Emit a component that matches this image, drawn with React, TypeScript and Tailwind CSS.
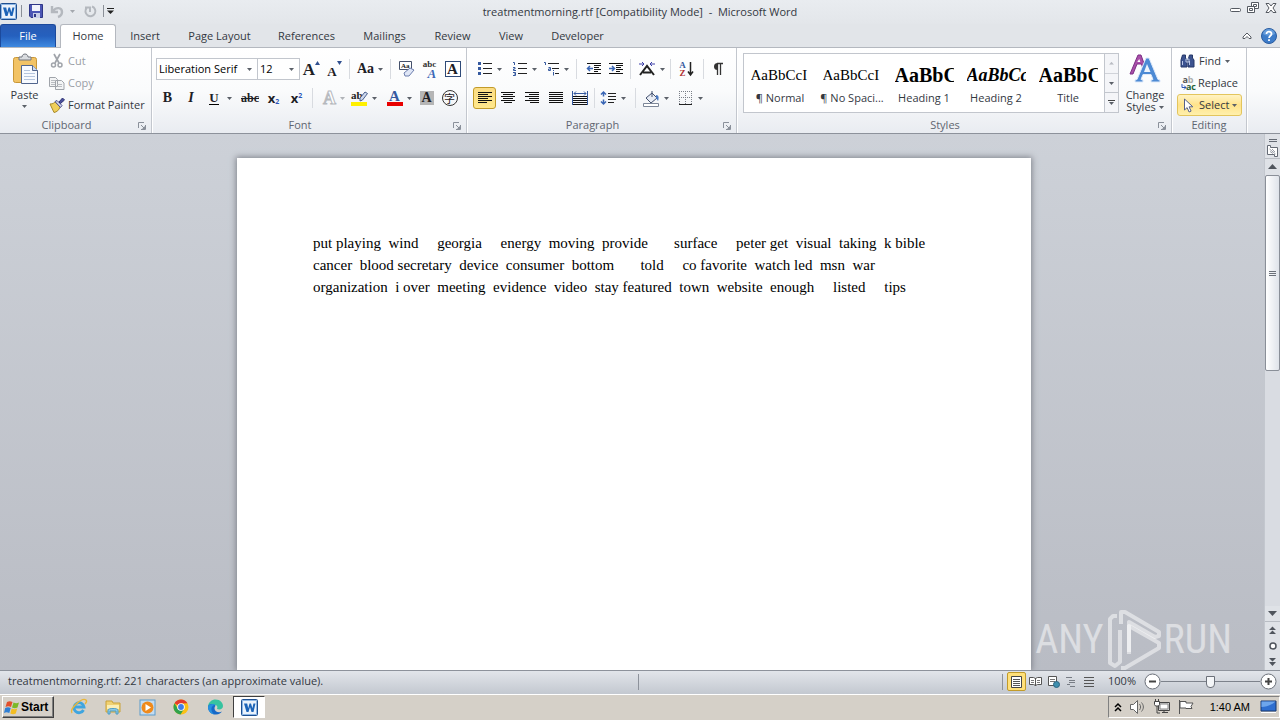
import React from "react";

type Kids = { children?: React.ReactNode };

const Svg = ({ w = 16, h = 16, children }: Kids & { w?: number; h?: number }) => (
  <svg width={w} height={h} viewBox={`0 0 ${w} ${h}`} fill="none" className="shrink-0 overflow-visible" aria-hidden="true">
    {children}
  </svg>
);

const Caret = ({ color = "#5b6068" }: { color?: string }) => (
  <svg width="5" height="3" viewBox="0 0 5 3" className="shrink-0" aria-hidden="true">
    <path d="M0 0h5L2.5 3z" fill={color} />
  </svg>
);

const Btn = ({ label, className = "w-[23px]", children }: Kids & { label: string; className?: string }) => (
  <button aria-label={label} className={`flex h-[22px] shrink-0 items-center justify-center gap-1 ${className}`}>
    {children}
  </button>
);

const Sep = ({ className = "mx-1" }: { className?: string }) => (
  <span className={`h-[20px] w-px shrink-0 bg-[#d8dbe0] ${className}`} />
);

const Group = ({ title, launcher = true, className = "", children }: Kids & { title: string; launcher?: boolean; className?: string }) => (
  <section
    aria-label={title}
    className={`flex shrink-0 flex-col border-r border-[#c3c7ce] shadow-[1px_0_0_#fff] ${className}`}
  >
    <div className="h-[70px]">{children}</div>
    <div className="flex h-[15px] items-center">
      <span className={`flex-1 text-center text-[#5f6671] ${launcher ? "pl-1" : ""}`}>{title}</span>
      {launcher && (
        <button aria-label={`${title} options`} className="flex w-[22px] justify-center pl-1">
          <Svg w={8} h={8}>
            <path d="M.5 6V.5H6M3 3l3 3M7.5 3v4.5H3" stroke="#8a909a" />
            <path d="M7 4v3H4z" fill="#8a909a" />
          </Svg>
        </button>
      )}
    </div>
  </section>
);

const WordLogo = () => (
  <Svg w={17} h={17}>
    <rect x=".5" y=".5" width="16" height="16" rx="1" fill="#eaf2fb" stroke="#1d4f91" />
    <rect x="1.500" y="1.500" width="14" height="14" fill="none" stroke="#8db6e4" />
    <path d="M3 4.500h3.200l1 4.800 1.300-4.800H10l1.400 4.800 1-4.800H14.500L12.500 13h-2L9 8l-1.500 5h-2z" fill="#1c64b8" />
  </Svg>
);

const lines = (rows: [number, number][], y0 = 2, step = 2) =>
  rows.map(([a, b], i) => <path key={i} d={`M${a} ${y0 + i * step + 0.5}H${b}`} stroke="#111" />);

const L: [number, number][] = [[1, 15], [1, 11], [1, 15], [1, 11], [1, 15], [1, 10]];
const C: [number, number][] = [[1, 15], [3, 13], [1, 15], [3, 13], [1, 15], [4, 12]];
const R: [number, number][] = [[1, 15], [5, 15], [1, 15], [5, 15], [1, 15], [6, 15]];
const J: [number, number][] = [[1, 15], [1, 15], [1, 15], [1, 15], [1, 15], [1, 15]];

const Title = () => (
  <header className="flex h-6 shrink-0 items-center bg-linear-to-b from-[#e9ecf0] to-[#e3e6ea] text-[#33383f]">
    <div className="flex w-[300px] items-center pb-[2px]">
      <WordLogo />
      <Sep className="mr-[6px] ml-1 !h-3 !bg-[#8b9098]" />
      <button aria-label="Save" className="ml-px">
        <Svg w={14} h={14}>
          <path d="M.5.5h13v13H2L.5 12z" fill="#4c56b4" stroke="#2f3787" />
          <path d="M3 1h8v6H3z" fill="#f2f4fb" />
          <path d="M4 9h7v5H4z" fill="#c9cfe8" />
          <path d="M5 10h2v3H5z" fill="#2f3787" />
        </Svg>
      </button>
      <button aria-label="Undo" className="ml-[7px] flex items-center gap-[5px]">
        <Svg w={15} h={16}>
          <path d="M2 3v6h6M3 8c3-4 9-4 9 1 0 2-1 4-4 5" stroke="#b4b8be" strokeWidth="2.4" />
        </Svg>
        <Caret color="#a4a8ae" />
      </button>
      <button aria-label="Repeat" className="ml-[8px]">
        <Svg w={14} h={16}>
          <path d="M9 3.500A5 5 0 1 1 3.600 5M2 4.500h5V9" stroke="#b4b8be" strokeWidth="2" />
        </Svg>
      </button>
      <Sep className="mr-[3px] ml-[6px] !h-3 !bg-[#8b9098]" />
      <button aria-label="Customize toolbar">
        <Svg w={7} h={6}>
          <path d="M0 .5h7" stroke="#222" />
          <path d="M0 2.500h7L3.500 6z" fill="#222" />
        </Svg>
      </button>
    </div>
    <h1 className="flex-1 text-center text-[11px] whitespace-pre">treatmentmorning.rtf [Compatibility Mode]  -  Microsoft Word</h1>
    <div className="flex w-[300px] items-center justify-end gap-[6px] self-start pt-[2px] pr-[3px]">
      <button aria-label="Minimize">
        <Svg w={11} h={12}>
          <rect x=".5" y="6.500" width="10" height="3" rx="1" fill="#fff" stroke="#555a62" />
        </Svg>
      </button>
      <button aria-label="Restore">
        <Svg w={12} h={12}>
          <path d="M4.500.5h7v6h-7z" fill="#fff" stroke="#555a62" />
          <path d="M6.500 2.500h3v2h-3z" stroke="#555a62" />
          <path d="M.5 4.500h7v6h-7z" fill="#fff" stroke="#555a62" />
          <path d="M2.500 6.500h3v2h-3z" stroke="#555a62" />
        </Svg>
      </button>
      <button aria-label="Close">
        <Svg w={12} h={12}>
          <path d="M1 1.500h3L6 4l2-2.500h3L8 6l3 4.500H8L6 8l-2 2.500H1L4 6z" fill="#fff" stroke="#555a62" />
        </Svg>
      </button>
    </div>
  </header>
);

const TABS: [string, string][] = [
  ["Insert", "w-[58px]"],
  ["Page Layout", "w-[91px]"],
  ["References", "w-[83px]"],
  ["Mailings", "w-[73px]"],
  ["Review", "w-[63px]"],
  ["View", "w-[54px]"],
  ["Developer", "w-[79px]"],
];

const Tabs = () => (
  <nav className="flex h-6 shrink-0 items-end border-b border-[#b4b8bf] bg-[#e2e5e9] text-[#33383f]">
    <button className="h-[23px] w-14 rounded-t-[3px] border border-b-0 border-[#1c4a9c] bg-linear-to-b from-[#2a5cb4] via-[#2560be] to-[#3f8ae0] text-white">
      File
    </button>
    <button className="relative -mb-px ml-1 h-6 w-14 rounded-t-[3px] border border-b-0 border-[#b4b8bf] bg-white">Home</button>
    {TABS.map(([t, w]) => (
      <button key={t} className={`h-[23px] pt-px ${w}`}>
        {t}
      </button>
    ))}
    <div className="flex h-[23px] flex-1 items-center justify-end gap-[9px] pr-[3px]">
      <button aria-label="Collapse ribbon">
        <Svg w={10} h={8}>
          <path d="M1 5 5 1l4 4v1.500H7L5 4.500l-2 2H1z" fill="#fff" stroke="#555a62" />
        </Svg>
      </button>
      <button aria-label="Help">
        <Svg w={16} h={16}>
          <circle cx="8" cy="8" r="7.500" fill="#3d7cc9" stroke="#2a5c9f" />
          <path d="M2 6a6 5 0 0 1 12 0c-3 2-9 2-12 0" fill="#7fb0e6" opacity=".6" />
          <path d="M5.500 6c0-3.500 5.200-3 5 0 0 1.800-2.400 1.800-2.400 4M8 11.300v1.700" stroke="#fff" strokeWidth="1.800" />
        </Svg>
      </button>
    </div>
  </nav>
);

const Clipboard = () => (
  <Group title="Clipboard" className="w-[152px]">
    <div className="flex pt-[2px]">
      <button className="flex h-[63px] w-[49px] flex-col items-center pt-[3px]">
        <Svg w={28} h={32}>
          <rect x="2.500" y="4.500" width="23" height="25" rx="2" fill="#f2c365" stroke="#c99737" />
          <path d="M8 7V4h3c0-4 6-4 6 0h3v3z" fill="#d9dce0" stroke="#72777f" />
          <path d="M10.500 12.500h11l5 5v13h-16z" fill="#f7faff" stroke="#51658d" />
          <path d="M21.500 12.500v5h5" fill="#cfdcf0" stroke="#51658d" />
          <path d="M13 17.500h6M13 20.500h11M13 23.500h11M13 26.500h11" stroke="#b5c5de" />
        </Svg>
        <span className="leading-[20px]">Paste</span>
        <Caret />
      </button>
      <div className="flex flex-col text-[#9a9ea5]">
        <button className="flex h-[22px] items-center gap-[3px]">
          <Svg>
            <path d="m5 1 5 9M11 1 6 10" stroke="#a0a4aa" strokeWidth="1.700" />
            <circle cx="4.500" cy="12" r="2" stroke="#a0a4aa" strokeWidth="1.500" />
            <circle cx="11" cy="12" r="2" stroke="#a0a4aa" strokeWidth="1.500" />
          </Svg>
          Cut
        </button>
        <button className="flex h-[22px] items-center gap-[3px]">
          <Svg>
            <path d="M.5 2.500h6l2 2v7h-8zM6.500 5.500h6l2.500 2.500v6.500H6.500z" fill="#f3f4f5" stroke="#a0a4aa" />
            <path d="M2 5.500h4M2 7.500h4M2 9.500h4M8 9.500h5M8 11.500h5" stroke="#b9bcc1" />
          </Svg>
          Copy
        </button>
        <button className="flex h-[22px] items-center gap-[3px] text-[#33383f]">
          <Svg>
            <path d="M1 7c3 0 4-1 5-2l5 5c-1 3-3 5-6 5.500z" fill="#f0cf5a" stroke="#a98a2a" />
            <path d="m6 4.500 2-1 5 5-1.500 2z" fill="#d4d7ee" stroke="#4b4f8c" />
            <path d="m10 5 3.500-4 2 2-4 3.500z" fill="#4a4f9c" stroke="#2f3474" />
          </Svg>
          Format Painter
        </button>
      </div>
    </div>
  </Group>
);

const Serif = ({ children, className = "" }: Kids & { className?: string }) => (
  <span className={`font-['Liberation_Serif',serif] leading-none ${className}`}>{children}</span>
);

const Combo = ({ label, value, className }: { label: string; value: string; className: string }) => (
  <label className={`flex h-[22px] items-center border border-[#c2c6cd] bg-white pr-[5px] ${className}`}>
    <select aria-label={label} defaultValue={value} className="min-w-0 flex-1 appearance-none bg-transparent pl-[2px] text-black outline-none">
      <option>{value}</option>
    </select>
    <Caret />
  </label>
);

const FontGroup = () => (
  <Group title="Font" className="w-[315px]">
    <div className="flex flex-col gap-[7px] pt-[10px] pl-[4px] text-[#1d2025]">
      <div className="flex items-center">
        <Combo label="Font" value="Liberation Serif" className="w-[102px]" />
        <Combo label="Font size" value="12" className="-ml-px w-[43px]" />
        <Btn label="Grow font">
          <Serif className="text-[17px] font-bold">A</Serif>
          <span className="-ml-1 self-start"><Svg w={5} h={7}><path d="M0 7h5L2.500 3z" fill="#2f4f8f" /></Svg></span>
        </Btn>
        <Btn label="Shrink font">
          <Serif className="pt-1 text-[13px] font-bold">A</Serif>
          <span className="-ml-1 self-start"><Svg w={5} h={7}><path d="M0 3h5L2.500 7z" fill="#2f4f8f" /></Svg></span>
        </Btn>
        <Sep className="mr-1 ml-[3px]" />
        <Btn label="Change case" className="w-8"><Serif className="text-[14px] font-bold">Aa</Serif><Caret /></Btn>
        <Sep className="mx-1" />
        <Btn label="Clear formatting">
          <Svg w={17} h={16}>
            <path d="M1.500.5h12v8h-12z" fill="#fff" stroke="#44506b" />
            <text x="3" y="7" fontSize="7" fontFamily="Liberation Serif" fontWeight="bold" fill="#222">Aa</text>
            <path d="m6 12 6-5 4 2-5 6H7z" fill="#dfe6f6" stroke="#6d7fae" />
          </Svg>
        </Btn>
        <Btn label="Phonetic guide">
          <span className="flex flex-col items-end">
            <Serif className="text-[9px] !leading-[8px] font-bold text-[#333]">abc</Serif>
            <Serif className="text-[13px] !leading-[11px] font-bold text-[#3a66b5] italic">A</Serif>
          </span>
        </Btn>
        <Btn label="Character border">
          <span className="flex h-4 w-4 items-center justify-center border border-[#2e4a78] bg-white"><Serif className="text-[15px] font-bold">A</Serif></span>
        </Btn>
      </div>
      <div className="flex items-center">
        <Btn label="Bold"><Serif className="text-[14px] font-bold">B</Serif></Btn>
        <Btn label="Italic" className="w-6"><Serif className="text-[14px] font-bold italic">I</Serif></Btn>
        <Btn label="Underline" className="w-[35px]">
          <Serif className="border-b border-black text-[13px] font-bold">U</Serif>
          <span className="pl-1"><Caret /></span>
        </Btn>
        <Btn label="Strikethrough" className="w-6"><Serif className="text-[12px] font-bold line-through">abc</Serif></Btn>
        <Btn label="Subscript"><span className="flex items-end text-[13px] leading-none font-bold">x<small className="text-[7px] leading-none text-[#2a55b8]">2</small></span></Btn>
        <Btn label="Superscript"><span className="flex items-start text-[13px] leading-none font-bold">x<small className="text-[7px] leading-none text-[#2a55b8]">2</small></span></Btn>
        <Sep className="mr-2 ml-1" />
        <Btn label="Text effects" className="w-6">
          <Svg w={14} h={16}>
            <text x="1" y="14" fontSize="18" fontFamily="Liberation Serif" fontWeight="bold" fill="#fff" stroke="#b5b8bd">A</text>
          </Svg>
          <Caret color="#b0b3b8" />
        </Btn>
        <Btn label="Highlight color" className="w-[38px]">
          <Svg w={17} h={17}>
            <text x="0" y="9" fontSize="11" fontFamily="Liberation Serif" fontWeight="bold" fill="#222">ab</text>
            <path d="m9 8 5-6 2.500 1.500-5 6.500L9 11z" fill="#cdd8ee" stroke="#4a5e8c" />
            <path d="M0 12h16v4H0z" fill="#fff000" />
          </Svg>
          <Caret />
        </Btn>
        <Btn label="Font color" className="w-8">
          <Svg w={16} h={17}>
            <text x="2" y="11" fontSize="15" fontFamily="Liberation Serif" fontWeight="bold" fill="#35599f">A</text>
            <path d="M0 12h16v4H0z" fill="#e80000" />
          </Svg>
          <Caret />
        </Btn>
        <Btn label="Character shading">
          <span className="flex h-[14px] w-[14px] items-center justify-center bg-[#b5b5b5]"><Serif className="text-[14px] font-bold">A</Serif></span>
        </Btn>
        <Btn label="Enclose characters">
          <span className="flex h-4 w-4 items-center justify-center rounded-full border border-[#333] font-['Noto_Sans_CJK_JP',sans-serif] text-[11px] leading-none">字</span>
        </Btn>
      </div>
    </div>
  </Group>
);

const Indent = ({ right = false }: { right?: boolean }) => (
  <Svg>
    {lines([[1, 15], [8, 15], [8, 13], [8, 15], [8, 12], [1, 15]], 2)}
    <path d={right ? "M1 7.500h5M4 5l2.500 2.500L4 10" : "M7 7.500H2M4 5 1.500 7.500 4 10"} stroke="#3a66b5" strokeWidth="1.500" />
  </Svg>
);

const Paragraph = () => (
  <Group title="Paragraph" className="w-[270px]">
    <div className="flex flex-col gap-[7px] pt-[10px] pl-[6px]">
      <div className="flex items-center">
        <Btn label="Bullets" className="w-[33px]">
          <Svg>
            <path d="M6 2.500h9M6 7.500h9M6 12.500h9" stroke="#222" />
            <path d="M1 1h3v3H1zM1 6h3v3H1zM1 11h3v3H1z" fill="#35599f" />
          </Svg>
          <Caret />
        </Btn>
        <Btn label="Numbering" className="w-[36px]">
          <Svg>
            <path d="M6 2.500h9M6 7.500h9M6 12.500h9" stroke="#222" />
            <path d="M1 1.500h1.500V4M1 6.500h2V8H1.500v1.500H4M1 11.500h2.500v3H1M2 13h1" stroke="#35599f" />
          </Svg>
          <Caret />
        </Btn>
        <Btn label="Multilevel list" className="w-[29px]">
          <Svg>
            <path d="M4 2.500h11M8 7.500h7M11 12.500h4" stroke="#222" />
            <path d="M0 1.500h1.500V4M4.500 6.500h2v3H4.500V8h2M9.500 9v1M9.500 11v3.500" stroke="#35599f" />
          </Svg>
          <Caret />
        </Btn>
        <Sep className="mx-[5px]" />
        <Btn label="Decrease indent"><Indent /></Btn>
        <Btn label="Increase indent" className="w-[22px]"><Indent right /></Btn>
        <Sep className="mr-1 ml-[3px]" />
        <Btn label="Asian layout" className="w-8">
          <Svg w={18} h={16}>
            <path d="m2 14 7-9 7 9M5 11.500h8" stroke="#222" strokeWidth="2" />
            <path d="M1 3h5M4 1l2 2-2 2M17 3h-5M14 1l-2 2 2 2" stroke="#3c3fa8" />
          </Svg>
          <Caret />
        </Btn>
        <Sep className="mr-1 ml-[3px]" />
        <Btn label="Sort">
          <span className="flex items-center gap-px">
            <span className="flex flex-col items-center">
              <Serif className="text-[9px] !leading-[8px] font-bold text-[#35599f]">A</Serif>
              <Serif className="text-[9px] !leading-[8px] font-bold text-[#b03030]">Z</Serif>
            </span>
            <Svg w={7} h={16}>
              <path d="M3.500 1v12M1 10.500l2.500 3.500L6 10.500" stroke="#222" strokeWidth="1.500" />
            </Svg>
          </span>
        </Btn>
        <Sep className="mr-1 ml-[5px]" />
        <Btn label="Show formatting marks" className="w-5">
          <Svg w={10} h={16}>
            <path d="M4 2.500h6M4.500 3v11M7.500 3v11" stroke="#333" strokeWidth="1.300" />
            <path d="M4.500 2a3.500 3.500 0 0 0 0 7z" fill="#333" />
          </Svg>
        </Btn>
      </div>
      <div className="flex items-center">
        <button aria-label="Align left" aria-pressed="true" className="flex h-[22px] w-[23px] shrink-0 items-center justify-center rounded-[3px] border border-[#c29b29] bg-linear-to-b from-[#fbdc84] to-[#ffe88c]">
          <Svg>{lines(L)}</Svg>
        </button>
        <Btn label="Center" className="w-6"><Svg>{lines(C)}</Svg></Btn>
        <Btn label="Align right" className="w-6"><Svg>{lines(R)}</Svg></Btn>
        <Btn label="Justify" className="w-6"><Svg>{lines(J)}</Svg></Btn>
        <Btn label="Distributed">
          <Svg>
            {lines(J.slice(0, 5), 6)}
            <path d="M.5 1v14M15.500 1v14M2 3.500h12M4 1.500l-2 2 2 2M12 1.500l2 2-2 2" stroke="#35599f" />
          </Svg>
        </Btn>
        <Sep className="mr-1 ml-[3px]" />
        <Btn label="Line spacing" className="w-[28px]">
          <Svg w={17} h={16}>
            <path d="M8 3.500h8M8 6.500h8M8 9.500h8M8 12.500h6" stroke="#222" />
            <path d="M3.500 2v4.500M1 4.500 3.500 2 6 4.500M3.500 9.500V14M1 11.500 3.500 14 6 11.500" stroke="#3a66b5" strokeWidth="1.500" />
          </Svg>
          <Caret />
        </Btn>
        <Sep className="mr-[5px] ml-[8px]" />
        <Btn label="Shading" className="w-[30px]">
          <Svg w={17} h={17}>
            <path d="m3 8 6-5 5 5-6 5z" fill="#e9edf5" stroke="#42506e" />
            <path d="M9 1v6" stroke="#42506e" />
            <path d="M13 5c3 0 3 3 2 6l-2-3z" fill="#4a78c0" />
            <path d="M.5 13.500h15v3H.5z" fill="#fff" stroke="#7d8798" />
          </Svg>
          <Caret />
        </Btn>
        <Btn label="Borders" className="ml-1 w-[30px]">
          <Svg>
            <path d="M1.500 1v13M7.500 1v13M13.500 1v13M1 1.500h13M1 7.500h13" stroke="#7a7f88" strokeDasharray="1 1" />
            <path d="M1 14.500h13" stroke="#222" />
          </Svg>
          <Caret />
        </Btn>
      </div>
    </div>
  </Group>
);

const STYLES: [string, string, string][] = [
  ["¶ Normal", "AaBbCcI", "text-[15px]"],
  ["¶ No Spaci...", "AaBbCcI", "text-[15px]"],
  ["Heading 1", "AaBbC", "text-[20px] font-bold"],
  ["Heading 2", "AaBbCc", "text-[18px] font-bold italic"],
  ["Title", "AaBbC", "text-[20px] font-bold"],
];

const Styles = () => (
  <Group title="Styles" className="w-[435px]">
    <div className="flex pt-[5px] pl-[6px]">
      <div className="flex h-[60px] border border-[#c2c6cd] bg-white">
        {STYLES.map(([name, sample, cls]) => (
          <button key={name} className="flex w-[72px] flex-col items-center pt-[9px] text-[#33383f]">
            <span className={`flex h-6 w-[59px] items-center overflow-hidden font-['Liberation_Serif',serif] whitespace-nowrap text-black ${cls}`}>{sample}</span>
            <span className="leading-[22px]">{name}</span>
          </button>
        ))}
        <div className="flex w-[14px] flex-col border-l border-[#c2c6cd] bg-[#f4f5f8]">
          <button aria-label="Scroll styles up" className="flex flex-1 rotate-180 items-center justify-center"><Caret color="#b9bcc2" /></button>
          <button aria-label="Scroll styles down" className="flex flex-1 items-center justify-center border-t border-[#d0d3d9]"><Caret /></button>
          <button aria-label="More styles" className="flex flex-1 flex-col items-center justify-center gap-px border-t border-[#c2c6cd]">
            <span className="h-px w-[7px] bg-[#444]" />
            <Caret />
          </button>
        </div>
      </div>
      <button className="flex w-[52px] flex-col items-center text-[#33383f]">
        <Svg w={32} h={35}>
          <path d="M1 21 9 2h3l5 14h-3l-1.500-5H8l-4 10z" fill="#a94fa8" stroke="#7c2f86" />
          <path d="m10.300 6-2 3h3z" fill="#fff" />
          <path d="M6 29v-2l2-.5L17 5h3l9 21.500 2 .5v2h-9v-2l2-.5-2-5h-8l-2 5 2 .5v2z" fill="#4d8ad4" stroke="#dfeafa" />
          <path d="m18 11-3 8h6.500z" fill="#eef4fc" />
        </Svg>
        <span className="leading-[13px]">Change</span>
        <span className="flex items-center gap-[3px] leading-[12px]">Styles <Caret /></span>
      </button>
    </div>
  </Group>
);

const Editing = () => (
  <Group title="Editing" launcher={false} className="w-[75px]">
    <div className="flex flex-col pt-[2px] pl-[5px] text-[#33383f]">
      <button className="flex h-[22px] items-center gap-[4px] pl-[3px]">
        <Svg w={15} h={14}>
          <path d="M2.500 1h3v3L7 6v7H1V6zM9.500 1h3v3L14 6v7H8V6z" fill="#3c5390" stroke="#263868" />
          <path d="M6 5h3v3H6zM2.500 7v4M9.500 7v4" stroke="#b9c6e6" />
        </Svg>
        Find <Caret />
      </button>
      <button className="flex h-[22px] items-center gap-[2px] pl-[3px]">
        <span className="flex w-4 flex-col text-[9px] font-bold">
          <span className="leading-[7px] text-[#555]">a<span className="text-[#aaa]">b</span></span>
          <span className="flex items-center justify-end leading-[8px] text-[#25623a]">
            <Svg w={5} h={6}><path d="M1 0v3.500h4M3 1.500l2 2-2 2" stroke="#2a55b8" /></Svg>
            ac
          </span>
        </span>
        Replace
      </button>
      <button className="flex h-[22px] w-[65px] items-center gap-[3px] rounded-[3px] border border-[#e3c55d] bg-linear-to-b from-[#fff3c4] via-[#ffe38a] to-[#fff0ac] pl-[3px]">
        <Svg w={15} h={15}>
          <path d="M3.500 1v11l2.600-2.400 2 4.400 2-.9-2-4.300h3.700z" fill="#fff" stroke="#56618a" />
        </Svg>
        Select <Caret />
      </button>
    </div>
  </Group>
);

const Scrollbar = () => (
  <div className="flex w-4 shrink-0 flex-col items-center border-l border-[#c3c7ce] bg-[#dfe2e7]">
    <button aria-label="Split" className="flex h-[9px] items-end"><Svg w={10} h={4}><path d="M1 .5h8M1 2.500h8" stroke="#646a74" /></Svg></button>
    <button aria-label="Ruler" className="flex h-4 w-full items-center justify-center border-b border-[#b9bdc4]">
      <Svg w={13} h={12}>
        <path d="M1.500.5h3v2h7v9h-3v-2h-7z" fill="#fff" stroke="#646a74" />
        <path d="m3.500 4 6 5M6 4l3 3M4 6.500l3 2" stroke="#9a9fa8" />
      </Svg>
    </button>
    <button aria-label="Scroll up" className="flex h-4 rotate-180 items-center"><Svg w={9} h={5}><path d="M0 0h9L4.500 5z" fill="#50555d" /></Svg></button>
    <div className="flex w-full flex-1 flex-col bg-[#d9dce2]">
      <div className="flex h-[196px] w-full flex-col items-center justify-center gap-px rounded-[2px] border border-[#8a8f98] bg-linear-to-r from-white to-[#dfe3ea]">
        <span className="h-px w-[7px] bg-[#6b7079]" />
        <span className="h-px w-[7px] bg-[#6b7079]" />
        <span className="h-px w-[7px] bg-[#6b7079]" />
      </div>
    </div>
    <button aria-label="Scroll down" className="flex h-4 w-full items-center justify-center border-b border-[#b9bdc4]"><Svg w={9} h={5}><path d="M0 0h9L4.500 5z" fill="#50555d" /></Svg></button>
    <button aria-label="Previous page" className="flex h-4 items-center"><Svg w={7} h={8}><path d="M0 4 3.500.5 7 4zM0 8l3.500-3.500L7 8z" fill="#50555d" /></Svg></button>
    <button aria-label="Browse object" className="flex h-4 items-center"><Svg w={8} h={8}><circle cx="4" cy="4" r="3" fill="#fff" stroke="#50555d" strokeWidth="1.500" /></Svg></button>
    <button aria-label="Next page" className="flex h-4 items-center"><Svg w={7} h={8}><path d="M0 0h7L3.500 3.500zM0 4h7L3.500 8z" fill="#50555d" /></Svg></button>
  </div>
);

const TEXT = [
  "put playing  wind     georgia     energy  moving  provide       surface     peter get  visual  taking  k bible",
  "cancer  blood secretary  device  consumer  bottom       told     co favorite  watch led  msn  war",
  "organization  i over  meeting  evidence  video  stay featured  town  website  enough     listed     tips",
];

const Watermark = () => (
  <div className="pointer-events-none absolute right-8 bottom-0 flex h-[60px] items-center gap-px font-['Roboto_Condensed','Liberation_Sans_Narrow',sans-serif] text-[40px] leading-none text-white/50">
    <span>ANY</span>
    <Svg w={58} h={60}>
      <g stroke="#fff" strokeOpacity=".5" strokeWidth="4" strokeLinejoin="round">
        <path d="M12 6H8L5 9v44l5 3 5-4V20" />
        <path d="M16 14V2h4l34 20v4l-4 1-26-15v32" />
        <path d="M16 58h4l34-20v-5L24 16v26" />
      </g>
    </Svg>
    <span>RUN</span>
  </div>
);

const View = ({ label, children }: Kids & { label: string }) => (
  <button aria-label={label} className="flex h-[18px] w-[18px] items-center justify-center">{children}</button>
);

const Status = () => (
  <footer className="flex h-6 shrink-0 items-center border-t border-[#8d929b] bg-linear-to-b from-[#e2e5ea] to-[#c3c8d0] text-[#33383f]">
    <div className="flex h-full w-1/2 items-center pb-[2px] pl-2">
      <span className="flex-1">treatmentmorning.rtf: 221 characters (an approximate value).</span>
      <Sep className="mr-px !h-4 !bg-[#8d929b]" />
    </div>
    <div className="flex h-full flex-1 items-center justify-end pb-[2px]">
      <Sep className="mr-1 !h-4 !bg-[#8d929b]" />
      <button aria-label="Print layout" aria-pressed="true" className="flex h-[19px] w-[19px] items-center justify-center rounded-[2px] border border-[#c29b29] bg-[#ffe07a]">
        <Svg w={13} h={12}><path d="M1.500.5h10v11h-10z" fill="#fff" stroke="#444" /><path d="M3 3.500h7M3 5.500h7M3 7.500h7M3 9.500h7" stroke="#555" /></Svg>
      </button>
      <View label="Full screen reading"><Svg w={13} h={11}><path d="M.5 1.500h4l2 1 2-1h4v7h-4l-2 1-2-1h-4zM6.500 2v8" fill="#fff" stroke="#555" /><path d="M2 4.500h3M2 6.500h3M8 4.500h3M8 6.500h3" stroke="#777" /></Svg></View>
      <View label="Web layout"><Svg w={13} h={12}><path d="M1.500.5h8v9h-8z" fill="#fff" stroke="#555" /><path d="M3 3.500h5M3 5.500h5" stroke="#777" /><circle cx="9.500" cy="8.500" r="3" fill="#3f8fae" stroke="#2a6480" /></Svg></View>
      <View label="Outline"><Svg w={12} h={12}><path d="M1 1.500h6M4 4.500h6M4 6.500h6M2 8.500h3M5 10.500h5" stroke="#777c84" /></Svg></View>
      <View label="Draft"><Svg w={12} h={12}><path d="M1 1.500h10M1 4.500h10M1 7.500h10M1 10.500h10" stroke="#555" /></Svg></View>
      <button className="w-[44px] pl-1 text-center">100%</button>
      <button aria-label="Zoom out" className="ml-[2px]"><Svg w={17} h={17}><circle cx="8.500" cy="8.500" r="7.500" fill="#fff" stroke="#6b7079" /><path d="M5 8.500h7" stroke="#444" strokeWidth="2" /></Svg></button>
      <input
        type="range"
        aria-label="Zoom"
        min={0}
        max={100}
        defaultValue={50}
        className="h-[14px] w-[99px] appearance-none bg-[linear-gradient(#7d828b,#7d828b)] bg-[length:100%_1px] bg-center bg-no-repeat [&::-webkit-slider-thumb]:h-3 [&::-webkit-slider-thumb]:w-[9px] [&::-webkit-slider-thumb]:appearance-none [&::-webkit-slider-thumb]:rounded-b-[4px] [&::-webkit-slider-thumb]:border [&::-webkit-slider-thumb]:border-solid [&::-webkit-slider-thumb]:border-[#6b7079] [&::-webkit-slider-thumb]:bg-[#f4f6f8]"
      />
      <button aria-label="Zoom in" className="mr-[3px]"><Svg w={17} h={17}><circle cx="8.500" cy="8.500" r="7.500" fill="#fff" stroke="#6b7079" /><path d="M5 8.500h7M8.500 5v7" stroke="#444" strokeWidth="2" /></Svg></button>
    </div>
  </footer>
);

const Task = ({ label, children }: Kids & { label: string }) => (
  <button aria-label={label} className="flex h-[22px] w-[34px] items-center justify-center">{children}</button>
);

const Taskbar = () => (
  <div className="flex h-[26px] shrink-0 items-center border-t border-white bg-[#d5d0c8] pb-px pl-[2px] font-['Liberation_Sans',sans-serif] text-black">
    <button className="flex h-[22px] w-[52px] items-center gap-px border border-t-white border-r-[#404040] border-b-[#404040] border-l-white pl-px text-[12px] font-bold shadow-[inset_-1px_-1px_0_#808080]">
      <Svg w={16} h={15}>
        <path d="M3 2c2-1 3.500-1 5.500 0L7 7c-2-1-3.500-1-5.500 0z" fill="#e2502c" />
        <path d="M9.500 2.500c2 1 3.500 1 5.500 0L13.500 7.500c-2 1-3.500 1-5.500 0z" fill="#7cb928" />
        <path d="M1.200 8c2-1 3.500-1 5.500 0L5.300 13c-2-1-3.500-1-5.300 0z" fill="#2f7fd4" />
        <path d="M7.700 8.500c2 1 3.500 1 5.500 0L11.800 13.500c-2 1-3.500 1-5.500 0z" fill="#f3bd22" />
      </Svg>
      Start
    </button>
    <div className="ml-2 flex items-center">
      <Task label="Internet Explorer">
        <Svg w={18} h={18}>
          <path d="M13.500 12A5 5 0 1 1 14 9H5" stroke="#3fa5df" strokeWidth="2.800" />
          <path d="M2 15C-1 11 12-1 16 2c1 1 0 3-1 4" stroke="#e8b63a" strokeWidth="1.400" />
        </Svg>
      </Task>
      <Task label="Explorer">
        <Svg w={18} h={18}>
          <path d="M2 3h6l1 2h7v9H2z" fill="#f0d172" stroke="#c9a238" />
          <path d="M3 7h12v4H3z" fill="#fbeeb5" />
          <path d="M4 16v-4c0-2 10-2 10 0v4h-2v-3H6v3z" fill="#8ecbe8" stroke="#4d9cc4" />
        </Svg>
      </Task>
      <Task label="Media Player">
        <Svg w={17} h={17}>
          <rect x="1" y="1" width="15" height="15" fill="#c5dcf0" stroke="#5c9ccc" />
          <circle cx="8.500" cy="8.500" r="6" fill="#ef8a1c" />
          <path d="M6.500 5v7l5.500-3.500z" fill="#fff" />
        </Svg>
      </Task>
      <Task label="Chrome">
        <Svg w={16} h={16}>
          <circle cx="8" cy="8" r="7.500" fill="#fbc116" />
          <path d="M8 8 1.500 4.200A7.500 7.500 0 0 1 14.500 4.300L8 4.500z" fill="#e33b2e" />
          <path d="M1.500 4.200A7.500 7.500 0 0 0 7.500 15.500L11 10 8 11.500 5 10z" fill="#30a24c" />
          <circle cx="8" cy="8" r="3.800" fill="#fff" />
          <circle cx="8" cy="8" r="2.900" fill="#3f7ee8" />
        </Svg>
      </Task>
      <Task label="Edge">
        <Svg w={17} h={16}>
          <path d="M1 8C1 3 5 .5 8.500.5c5 0 7.500 3.500 7.500 6.500 0 3-3 4-6 3 1-2 0-4-2-4C5 6 2 6 1 8" fill="#37c3a0" />
          <path d="M1 8c0 5 4 7.500 8 7.500 3 0 5-1.500 6-3-3 1.500-7.500.5-7.500-3 0-2 1-2.500 1-3C5 4 1.500 5 1 8" fill="#1668c7" />
          <path d="M1 8c1-3 5-4 7.500-2C6 6 4 8 4.500 11c.4 2 1.500 3.700 3 4.400C4 15 1 12 1 8" fill="#2790df" />
        </Svg>
      </Task>
      <button aria-label="Word" className="ml-px flex h-[22px] w-[32px] items-center justify-center border border-t-[#404040] border-r-white border-b-white border-l-[#404040] bg-white">
        <WordLogo />
      </button>
    </div>
    <div className="ml-auto flex h-[22px] items-center border border-t-[#808080] border-r-white border-b-white border-l-[#808080] pr-[2px] pl-[6px]">
      <button aria-label="Show hidden icons" className="mr-[8px]"><Svg w={6} h={9}><path d="m0 4 3-3 3 3M0 8l3-3 3 3" stroke="#000" strokeWidth="1.500" /></Svg></button>
      <button aria-label="Volume" className="mr-2">
        <Svg w={17} h={16}>
          <path d="M1.500 5.500h3l4-4v13l-4-4h-3z" fill="#fff" stroke="#666" />
          <path d="M10.500 5c1.500 2 1.500 4 0 6M12.500 3.500c2.500 3 2.500 6 0 9" stroke="#666" />
        </Svg>
      </button>
      <button aria-label="Network" className="mr-2">
        <Svg w={16} h={16}>
          <path d="M4.500 3.500h11v8h-11z" fill="#d5d5d5" stroke="#444" />
          <path d="M6 5h8v5H6z" fill="#fff" stroke="#888" />
          <path d="M8 13.500h6M10 12v1" stroke="#444" />
          <path d="M.5 2.500h5v3l-1 1.500h-3L.5 5.500z" fill="#fff" stroke="#444" />
          <path d="M1.500 0v2M4.500 0v2M3 7v7h3" stroke="#444" />
        </Svg>
      </button>
      <button aria-label="Action Center" className="mr-[16px]">
        <Svg w={16} h={16}><path d="M1.500 1v14M2 2.500h6v1.500h7l-2 3.500 1 2H8V9H2z" fill="#fff" stroke="#555" /></Svg>
      </button>
      <time className="mr-[10px] text-[11px]">1:40 AM</time>
      <button aria-label="Display">
        <Svg w={17} h={14}><path d="M1 1h15v10H1z" fill="#2f6fd0" stroke="#18386f" /><path d="M1.500 1.500h14C12 5 6 7 1.500 7z" fill="#6ea6ec" /><path d="M1 12.500h15" stroke="#fff" /></Svg>
      </button>
    </div>
  </div>
);

export default function App() {
  return (
    <div className="flex h-screen flex-col overflow-hidden font-['Open_Sans','Noto_Sans',sans-serif] text-[11px] text-[#33383f]">
      <Title />
      <Tabs />
      <div className="flex h-[86px] shrink-0 border-b border-[#8d929b] bg-linear-to-b from-white via-[#fafbfc] to-[#e9ecf1]">
        <Clipboard />
        <FontGroup />
        <Paragraph />
        <Styles />
        <Editing />
      </div>
      <div className="flex min-h-0 flex-1 bg-linear-to-b from-[#cdd1d8] to-[#b9bcc4]">
        <main className="relative flex min-w-0 flex-1 justify-center overflow-hidden pt-6 pl-1">
          <article className="w-[794px] shrink-0 bg-white px-[76px] pt-[74px] font-['Liberation_Serif',serif] text-[15px] leading-[22px] text-black shadow-[0_0_6px_1px_#7f838b]">
            {TEXT.map((t) => (
              <p key={t} className="whitespace-pre">{t}</p>
            ))}
          </article>
          <Watermark />
        </main>
        <Scrollbar />
      </div>
      <Status />
      <Taskbar />
    </div>
  );
}
